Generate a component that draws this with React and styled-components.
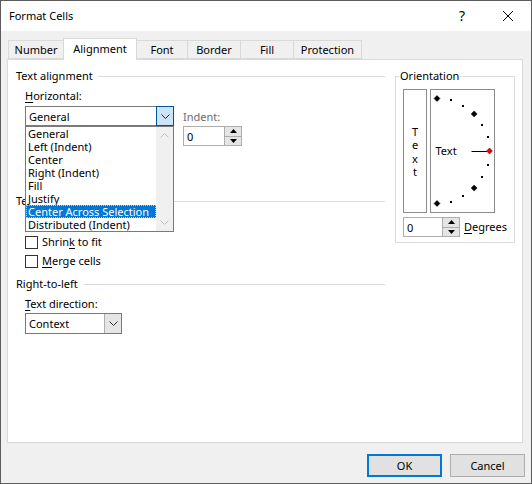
import React from 'react';
import styled, { createGlobalStyle } from 'styled-components';

const TABS = [
  { label: 'Number', width: 56 },
  { label: 'Alignment', width: 74, active: true },
  { label: 'Font', width: 52 },
  { label: 'Border', width: 54 },
  { label: 'Fill', width: 54 },
  { label: 'Protection', width: 69 },
];

const HORIZONTAL_OPTIONS = [
  'General',
  'Left (Indent)',
  'Center',
  'Right (Indent)',
  'Fill',
  'Justify',
  'Center Across Selection',
  'Distributed (Indent)',
];

const SELECTED_OPTION = 'Center Across Selection';

const Chevron = ({ up, color = '#333' }) => (
  <svg width="9" height="5" viewBox="0 0 9 5">
    <polyline
      points={up ? '0.5,4.5 4.5,0.5 8.5,4.5' : '0.5,0.5 4.5,4.5 8.5,0.5'}
      fill="none"
      stroke={color}
      strokeWidth="1"
    />
  </svg>
);

const Triangle = ({ up }) => (
  <svg width="7" height="4" viewBox="0 0 7 4">
    <polygon points={up ? '3.5,0 7,4 0,4' : '0,0 7,0 3.5,4'} fill="#000" />
  </svg>
);

const Spinner = ({ value, width }) => (
  <Spin $width={width}>
    <SpinValue>{value}</SpinValue>
    <SpinButtons>
      <SpinButton>
        <Triangle up />
      </SpinButton>
      <SpinButton>
        <Triangle />
      </SpinButton>
    </SpinButtons>
  </Spin>
);

const Dial = () => {
  const cx = 6;
  const cy = 61;
  const r = 52.5;
  const marks = [];
  for (let a = -90; a <= 90; a += 15) {
    const rad = (a * Math.PI) / 180;
    const x = cx + r * Math.cos(rad);
    const y = cy + r * Math.sin(rad);
    if (a % 45 === 0) {
      const red = a === 0;
      marks.push(
        <polygon
          key={a}
          points={`${x},${y - 3} ${x + 3},${y} ${x},${y + 3} ${x - 3},${y}`}
          fill={red ? '#e3000f' : '#000'}
          stroke={red ? '#8a0000' : '#000'}
          strokeWidth="0.5"
        />
      );
    } else {
      marks.push(
        <rect key={a} x={Math.round(x) - 1} y={Math.round(y) - 1} width="2" height="2" fill="#000" />
      );
    }
  }
  return (
    <svg width="63" height="122" viewBox="0 0 63 122">
      <text x="4.5" y="65" fontFamily="Noto Sans, sans-serif" fontSize="11" fill="#000">
        Text
      </text>
      <line x1="40.5" y1="61.5" x2="56" y2="61.5" stroke="#000" strokeWidth="1" />
      {marks}
    </svg>
  );
};

const App = () => (
  <>
    <GlobalStyle />
    <Window>
      <TitleBar>
        <Title>Format Cells</Title>
        <TitleControls>
          <TitleButton>
            <HelpGlyph>?</HelpGlyph>
          </TitleButton>
          <TitleButton>
            <svg width="10" height="10" viewBox="0 0 10 10">
              <line x1="0" y1="0" x2="10" y2="10" stroke="#000" strokeWidth="1" />
              <line x1="10" y1="0" x2="0" y2="10" stroke="#000" strokeWidth="1" />
            </svg>
          </TitleButton>
        </TitleControls>
      </TitleBar>

      <Body>
        <TabRow>
          {TABS.map((t) => (
            <Tab key={t.label} $width={t.width} $active={t.active}>
              {t.label}
            </Tab>
          ))}
        </TabRow>

        <Panel>
          <Columns>
            <LeftColumn>
              <SectionHeading>Text alignment</SectionHeading>
              <FieldLabel>
                <Key>H</Key>orizontal:
              </FieldLabel>
              <ComboRow>
                <ComboWrap>
                  <Combo $width={149} $height={20}>
                    <ComboText>General</ComboText>
                    <ComboButton $active>
                      <Chevron color="#222" />
                    </ComboButton>
                  </Combo>
                  <DropList>
                    <ListItems>
                      {HORIZONTAL_OPTIONS.map((o) => (
                        <ListItem key={o} $selected={o === SELECTED_OPTION}>
                          {o}
                        </ListItem>
                      ))}
                    </ListItems>
                    <ScrollBar>
                      <ScrollArrow>
                        <Chevron up color="#c2c2c2" />
                      </ScrollArrow>
                      <ScrollArrow>
                        <Chevron color="#c2c2c2" />
                      </ScrollArrow>
                    </ScrollBar>
                  </DropList>
                </ComboWrap>
                <IndentGroup>
                  <DimLabel>Indent:</DimLabel>
                  <Spinner value="0" width={59} />
                </IndentGroup>
              </ComboRow>

              <SectionHeading $top={48}>Text control</SectionHeading>
              <CheckList>
                <CheckRow>
                  <CheckBox />
                  <span>
                    Shrin<Key>k</Key> to fit
                  </span>
                </CheckRow>
                <CheckRow>
                  <CheckBox />
                  <span>
                    <Key>M</Key>erge cells
                  </span>
                </CheckRow>
              </CheckList>

              <SectionHeading $top={9}>Right-to-left</SectionHeading>
              <FieldLabel>
                <Key>T</Key>ext direction:
              </FieldLabel>
              <Combo $width={97} $height={21} $top={2}>
                <ComboText>Context</ComboText>
                <ComboButton>
                  <Chevron />
                </ComboButton>
              </Combo>
            </LeftColumn>

            <Orientation>
              <Legend>Orientation</Legend>
              <DialRow>
                <VerticalBox>
                  <span>T</span>
                  <span>e</span>
                  <span>x</span>
                  <span>t</span>
                </VerticalBox>
                <ArcBox>
                  <Dial />
                </ArcBox>
              </DialRow>
              <DegreeRow>
                <Spinner value="0" width={59} />
                <DegreeLabel>
                  <Key>D</Key>egrees
                </DegreeLabel>
              </DegreeRow>
            </Orientation>
          </Columns>
        </Panel>

        <Footer>
          <DialogButton $default>OK</DialogButton>
          <DialogButton>Cancel</DialogButton>
        </Footer>
      </Body>
    </Window>
  </>
);

const GlobalStyle = createGlobalStyle`
  html, body {
    margin: 0;
    padding: 0;
    background: #fff;
  }
  body {
    font-family: "Noto Sans", "Liberation Sans", sans-serif;
    font-size: 11px;
    color: #000;
  }
  * {
    box-sizing: border-box;
  }
`;

const Window = styled.div`
  width: 532px;
  height: 484px;
  border: 1px solid #5c5c5c;
  background: #f0f0f0;
  display: flex;
  flex-direction: column;
`;

const TitleBar = styled.div`
  height: 30px;
  background: #fff;
  display: flex;
  align-items: center;
  padding-left: 8px;
`;

const Title = styled.div`
  font-size: 11px;
  line-height: 14px;
`;

const TitleControls = styled.div`
  margin-left: auto;
  display: flex;
  height: 100%;
`;

const TitleButton = styled.div`
  width: 46px;
  height: 100%;
  display: flex;
  align-items: center;
  justify-content: center;
`;

const HelpGlyph = styled.span`
  font-size: 14px;
  line-height: 14px;
`;

const Body = styled.div`
  flex: 1;
  padding-top: 7px;
  display: flex;
  flex-direction: column;
`;

const TabRow = styled.div`
  display: flex;
  align-items: flex-end;
  height: 21px;
  margin-left: 7px;
  position: relative;
  z-index: 1;
`;

const Tab = styled.div`
  width: ${(p) => p.$width}px;
  height: ${(p) => (p.$active ? 22 : 19)}px;
  margin-bottom: ${(p) => (p.$active ? -1 : 0)}px;
  margin-left: -1px;
  &:first-child {
    margin-left: 0;
  }
  border: 1px solid #d9d9d9;
  border-bottom: ${(p) => (p.$active ? 'none' : '1px solid #d9d9d9')};
  background: ${(p) => (p.$active ? '#fff' : '#f0f0f0')};
  position: relative;
  z-index: ${(p) => (p.$active ? 2 : 1)};
  display: flex;
  align-items: center;
  justify-content: center;
  padding-bottom: ${(p) => (p.$active ? 2 : 0)}px;
  line-height: 14px;
`;

const Panel = styled.div`
  margin-left: 6px;
  width: 516px;
  height: 384px;
  border: 1px solid #d9d9d9;
  background: #fff;
  padding: 9px 0 0 8px;
`;

const Columns = styled.div`
  display: grid;
  grid-template-columns: 369px 120px;
  column-gap: 10px;
  align-items: start;
`;

const LeftColumn = styled.div`
  display: flex;
  flex-direction: column;
`;

const SectionHeading = styled.div`
  display: flex;
  align-items: center;
  height: 14px;
  line-height: 14px;
  margin-top: ${(p) => p.$top || 0}px;
  white-space: nowrap;
  &::after {
    content: '';
    flex: 1;
    height: 1px;
    background: #dcdcdc;
    margin-left: 5px;
  }
`;

const FieldLabel = styled.div`
  height: 14px;
  line-height: 14px;
  margin: ${(p) => (p.$top !== undefined ? p.$top : 6)}px 0 0 9px;
`;

const Key = styled.span`
  text-decoration: underline;
  text-underline-offset: 2px;
`;

const ComboRow = styled.div`
  display: flex;
  align-items: flex-start;
  gap: 9px;
  margin: 3px 0 0 9px;
`;

const ComboWrap = styled.div`
  position: relative;
`;

const Combo = styled.div`
  display: flex;
  width: ${(p) => p.$width}px;
  height: ${(p) => p.$height}px;
  border: 1px solid #7a7a7a;
  background: #fff;
  margin-top: ${(p) => p.$top || 0}px;
  margin-left: ${(p) => (p.$top !== undefined ? 9 : 0)}px;
`;

const ComboText = styled.div`
  flex: 1;
  display: flex;
  align-items: center;
  padding-left: 3px;
`;

const ComboButton = styled.div`
  width: ${(p) => (p.$active ? 18 : 17)}px;
  margin: ${(p) => (p.$active ? '-1px -1px -1px 0' : '0')};
  display: flex;
  align-items: center;
  justify-content: center;
  background: ${(p) => (p.$active ? '#cce4f7' : '#e5e5e5')};
  border: ${(p) => (p.$active ? '1px solid #005499' : 'none')};
  border-left: 1px solid ${(p) => (p.$active ? '#005499' : '#adadad')};
`;

const DropList = styled.div`
  position: absolute;
  top: 100%;
  left: 0;
  width: 149px;
  height: 106px;
  border: 1px solid #7a7a7a;
  background: #fff;
  display: flex;
  z-index: 5;
`;

const ListItems = styled.div`
  flex: 1;
  display: flex;
  flex-direction: column;
`;

const ListItem = styled.div`
  height: 13px;
  line-height: 13px;
  padding-left: 2px;
  white-space: nowrap;
  background: ${(p) => (p.$selected ? '#0078d7' : 'transparent')};
  color: ${(p) => (p.$selected ? '#fff' : '#000')};
  outline: ${(p) => (p.$selected ? '1px dotted #f3c27a' : 'none')};
  outline-offset: -1px;
`;

const ScrollBar = styled.div`
  width: 17px;
  background: #f0f0f0;
  display: flex;
  flex-direction: column;
  justify-content: space-between;
`;

const ScrollArrow = styled.div`
  height: 17px;
  display: flex;
  align-items: center;
  justify-content: center;
`;

const IndentGroup = styled.div`
  display: flex;
  flex-direction: column;
  gap: 2px;
  padding-top: 4px;
`;

const DimLabel = styled.div`
  height: 14px;
  line-height: 14px;
  color: #6d6d6d;
`;

const Spin = styled.div`
  display: flex;
  width: ${(p) => p.$width}px;
  height: 20px;
  border: 1px solid #adadad;
  background: #fff;
`;

const SpinValue = styled.div`
  flex: 1;
  display: flex;
  align-items: center;
  padding-left: 3px;
`;

const SpinButtons = styled.div`
  width: 17px;
  display: flex;
  flex-direction: column;
  border-left: 1px solid #adadad;
`;

const SpinButton = styled.div`
  flex: 1;
  background: #e5e5e5;
  display: flex;
  align-items: center;
  justify-content: center;
  & + & {
    border-top: 1px solid #adadad;
  }
`;

const CheckList = styled.div`
  display: flex;
  flex-direction: column;
  gap: 5px;
  margin: 27px 0 0 9px;
`;

const CheckRow = styled.div`
  display: flex;
  align-items: center;
  gap: 4px;
  height: 14px;
  line-height: 14px;
`;

const CheckBox = styled.div`
  width: 13px;
  height: 13px;
  border: 1px solid #333;
  background: #fff;
`;

const Orientation = styled.fieldset`
  margin: 0;
  width: 120px;
  border: 1px solid #dcdcdc;
  padding: 6px 7px 5px 7px;
  min-width: 0;
`;

const Legend = styled.legend`
  padding: 0 1px;
  margin-left: -4px;
  line-height: 14px;
`;

const DialRow = styled.div`
  display: flex;
  gap: 3px;
`;

const VerticalBox = styled.div`
  width: 24px;
  height: 124px;
  border: 1px solid #8c8c8c;
  display: flex;
  flex-direction: column;
  align-items: center;
  justify-content: center;
  line-height: 13.5px;
  padding-top: 1px;
`;

const ArcBox = styled.div`
  width: 65px;
  height: 124px;
  border: 1px solid #8c8c8c;
  display: flex;
`;

const DegreeRow = styled.div`
  display: flex;
  align-items: center;
  gap: 4px;
  margin-top: 4px;
`;

const DegreeLabel = styled.div`
  line-height: 14px;
`;

const Footer = styled.div`
  display: flex;
  justify-content: flex-end;
  gap: 8px;
  margin-top: 11px;
  padding-right: 6px;
`;

const DialogButton = styled.div`
  width: 75px;
  height: 23px;
  display: flex;
  align-items: center;
  justify-content: center;
  background: #e1e1e1;
  border: ${(p) => (p.$default ? '2px solid #0078d7' : '1px solid #adadad')};
`;

export default App;
